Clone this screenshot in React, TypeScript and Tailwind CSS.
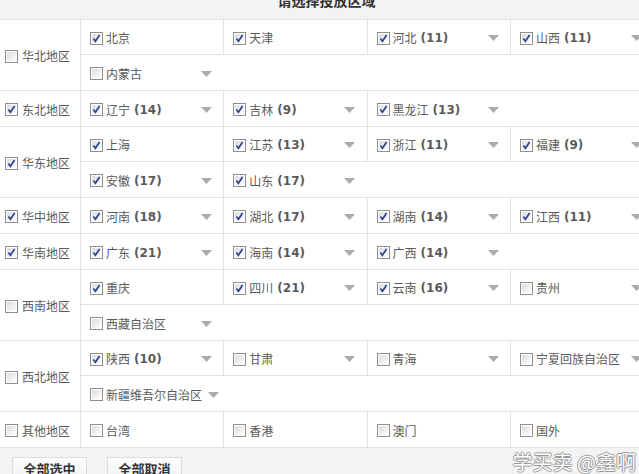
import type { ReactNode } from 'react'

type Province = {
  name: string
  checked: boolean
  count?: number
  sub?: boolean
}

type Region = {
  name: string
  checked: boolean
  lines: Province[][]
}

const p = (name: string, checked: boolean, count?: number, sub = true): Province => ({ name, checked, count, sub })

const regions: Region[] = [
  {
    name: '华北地区',
    checked: false,
    lines: [
      [p('北京', true, undefined, false), p('天津', true, undefined, false), p('河北', true, 11), p('山西', true, 11)],
      [p('内蒙古', false)],
    ],
  },
  {
    name: '东北地区',
    checked: true,
    lines: [[p('辽宁', true, 14), p('吉林', true, 9), p('黑龙江', true, 13)]],
  },
  {
    name: '华东地区',
    checked: true,
    lines: [
      [p('上海', true, undefined, false), p('江苏', true, 13), p('浙江', true, 11), p('福建', true, 9)],
      [p('安徽', true, 17), p('山东', true, 17)],
    ],
  },
  {
    name: '华中地区',
    checked: true,
    lines: [[p('河南', true, 18), p('湖北', true, 17), p('湖南', true, 14), p('江西', true, 11)]],
  },
  {
    name: '华南地区',
    checked: true,
    lines: [[p('广东', true, 21), p('海南', true, 14), p('广西', true, 14)]],
  },
  {
    name: '西南地区',
    checked: false,
    lines: [
      [p('重庆', true, undefined, false), p('四川', true, 21), p('云南', true, 16), p('贵州', false)],
      [p('西藏自治区', false)],
    ],
  },
  {
    name: '西北地区',
    checked: false,
    lines: [
      [p('陕西', true, 10), p('甘肃', false), p('青海', false), p('宁夏回族自治区', false)],
      [p('新疆维吾尔自治区', false)],
    ],
  },
  {
    name: '其他地区',
    checked: false,
    lines: [[p('台湾', false, undefined, false), p('香港', false, undefined, false), p('澳门', false, undefined, false), p('国外', false, undefined, false)]],
  },
]

function CheckBox({ checked }: { checked: boolean }) {
  return (
    <svg width="13" height="13" viewBox="0 0 13 13" className="shrink-0">
      <defs>
        <linearGradient id="cbg" x1="0" y1="0" x2="1" y2="1">
          <stop offset="0" stopColor="#dcdcdc" />
          <stop offset="1" stopColor="#ffffff" />
        </linearGradient>
      </defs>
      <rect x="0.5" y="0.5" width="12" height="12" fill="#fff" stroke="#8e8e8e" />
      <rect x="2" y="2" width="9" height="9" fill="url(#cbg)" />
      {checked && <path d="M3.4 6.6 L5.4 9.2 L9.6 3" fill="none" stroke="#2e4294" strokeWidth="1.7" />}
    </svg>
  )
}

function Arrow() {
  return (
    <svg width="11" height="6" viewBox="0 0 11 6" className="ml-[6px] shrink-0">
      <path d="M0 0 H11 L5.5 6 Z" fill="#ababab" />
    </svg>
  )
}

function Cell({ item }: { item: Province }) {
  return (
    <div className="flex h-full w-[143.3px] shrink-0 items-center border-l border-[#e2e2e2] pl-[9px] pt-[2px]">
      <CheckBox checked={item.checked} />
      <span className="ml-[3px] flex min-w-[89px] items-center whitespace-nowrap">
        {item.name}
        {item.count !== undefined && (
          <span className="ml-[4px] font-['DejaVu_Sans',sans-serif] text-[12px] font-bold">({item.count})</span>
        )}
      </span>
      {item.sub && <Arrow />}
    </div>
  )
}

function RegionRow({ region }: { region: Region }) {
  return (
    <div className="flex border-b border-[#e2e2e2]">
      <label className="flex w-[80px] shrink-0 items-center pl-[5px] pt-[2px]">
        <CheckBox checked={region.checked} />
        <span className="ml-[4px]">{region.name}</span>
      </label>
      <div className="flex flex-1 flex-col divide-y divide-[#e2e2e2]">
        {region.lines.map((line, i) => (
          <div key={i} className="flex h-[35px] shrink-0">
            {line.map((item) => (
              <Cell key={item.name} item={item} />
            ))}
          </div>
        ))}
      </div>
    </div>
  )
}

function Button({ children }: { children: ReactNode }) {
  return (
    <button className="h-[28px] w-[75px] border border-[#dcdcdc] bg-gradient-to-b from-[#fdfdfd] to-[#efefef] pb-[4px] text-[13px] font-bold text-[#333]">
      {children}
    </button>
  )
}

export default function App() {
  return (
    <div className="relative h-[474px] w-[639px] overflow-hidden bg-[#f3f3f3] font-['Noto_Sans_CJK_SC',sans-serif] text-[12px] text-[#5a5a5a]">
      <div className="w-[653px]">
        <div className="h-[20px] overflow-hidden border-b border-[#e2e2e2] bg-[#f3f3f3] text-center">
          <h3 className="-mt-[12px] text-[14px] font-bold leading-[24px] text-[#333]">请选择投放区域</h3>
        </div>
        <div className="bg-white">
          {regions.map((r) => (
            <RegionRow key={r.name} region={r} />
          ))}
        </div>
        <div className="flex gap-[20px] pl-[12px] pt-[9px]">
          <Button>全部选中</Button>
          <Button>全部取消</Button>
        </div>
      </div>
      <div className="absolute bottom-[2px] right-[3px] text-[20px] leading-none text-white [text-shadow:1px_0_0_#999,-1px_0_0_#999,0_1px_0_#999,0_-1px_0_#999]">
        学买卖 @鑫啊
      </div>
    </div>
  )
}
